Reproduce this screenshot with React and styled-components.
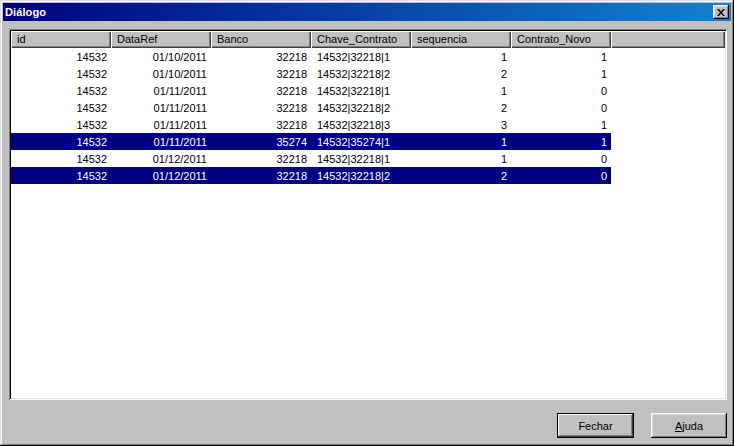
import React from "react";
import styled, { createGlobalStyle } from "styled-components";

const Global = createGlobalStyle`
  html, body { margin: 0; padding: 0; background: #c0c0c0; }
  body { font-family: "Liberation Sans", Arial, sans-serif; font-size: 11px; }
  #root { width: 734px; height: 446px; }
`;

const Window = styled.div`
  box-sizing: border-box;
  width: 734px;
  height: 446px;
  padding: 3px;
  background: #c0c0c0;
  display: flex;
  flex-direction: column;
  box-shadow: inset -1px -1px #000, inset 1px 1px #dfdfdf, inset -2px -2px #808080, inset 2px 2px #fff;
`;

const TitleBar = styled.div`
  height: 18px;
  flex: none;
  display: flex;
  align-items: center;
  justify-content: space-between;
  padding: 0 2px 0 2px;
  background: linear-gradient(to right, #000080, #1084d0);
`;

const Title = styled.span`
  color: #fff;
  font-weight: bold;
  font-size: 11px;
  letter-spacing: 0.1px;
`;

const CloseBtn = styled.div`
  box-sizing: border-box;
  width: 16px;
  height: 14px;
  background: #c0c0c0;
  display: flex;
  align-items: center;
  justify-content: center;
  box-shadow: inset -1px -1px #000, inset 1px 1px #fff, inset -2px -2px #808080, inset 2px 2px #dfdfdf;
`;

const Body = styled.div`
  flex: 1;
  display: flex;
  flex-direction: column;
  padding: 8px 4px 4px 6px;
`;

const ListBox = styled.div`
  flex: 1;
  box-sizing: border-box;
  padding: 2px;
  background: #fff;
  box-shadow: inset 1px 1px #808080, inset -1px -1px #fff, inset 2px 2px #000, inset -2px -2px #dfdfdf;
  overflow: hidden;
`;

const Header = styled.div`
  display: grid;
  grid-template-columns: repeat(6, 100px) 1fr;
  height: 17px;
`;

const HeaderCell = styled.div`
  box-sizing: border-box;
  background: #c0c0c0;
  padding: 2px 0 0 6px;
  color: #000;
  white-space: nowrap;
  box-shadow: inset 1px 1px #fff, inset -1px -1px #404040, inset -2px -2px #808080;
`;

const Row = styled.div`
  display: grid;
  grid-template-columns: repeat(6, 100px);
  width: 600px;
  height: 17px;
  align-items: center;
  background: ${(p) => (p.$selected ? "#000080" : "#fff")};
  color: ${(p) => (p.$selected ? "#fff" : "#000")};
`;

const Cell = styled.div`
  white-space: nowrap;
  text-align: ${(p) => (p.$left ? "left" : "right")};
  padding: ${(p) => (p.$left ? "0 0 0 6px" : "0 4px 0 0")};
`;

const Footer = styled.div`
  display: flex;
  justify-content: flex-end;
  gap: 17px;
  margin-top: 13px;
  padding-bottom: 1px;
`;

const Button = styled.div`
  box-sizing: border-box;
  width: ${(p) => p.$w}px;
  height: 25px;
  display: flex;
  align-items: center;
  justify-content: center;
  background: #c0c0c0;
  color: #000;
  font-size: 11px;
  box-shadow: ${(p) =>
    p.$default
      ? "inset 0 0 0 1px #000, inset -2px -2px #404040, inset 2px 2px #fff, inset -3px -3px #808080"
      : "inset -1px -1px #000, inset 1px 1px #fff, inset -2px -2px #808080, inset 2px 2px #dfdfdf"};
`;

const U = styled.span`
  text-decoration: underline;
`;

const columns = ["id", "DataRef", "Banco", "Chave_Contrato", "sequencia", "Contrato_Novo"];

const rows = [
  ["14532", "01/10/2011", "32218", "14532|32218|1", "1", "1", false],
  ["14532", "01/10/2011", "32218", "14532|32218|2", "2", "1", false],
  ["14532", "01/11/2011", "32218", "14532|32218|1", "1", "0", false],
  ["14532", "01/11/2011", "32218", "14532|32218|2", "2", "0", false],
  ["14532", "01/11/2011", "32218", "14532|32218|3", "3", "1", false],
  ["14532", "01/11/2011", "35274", "14532|35274|1", "1", "1", true],
  ["14532", "01/12/2011", "32218", "14532|32218|1", "1", "0", false],
  ["14532", "01/12/2011", "32218", "14532|32218|2", "2", "0", true],
];

export default function App() {
  return (
    <>
      <Global />
      <Window>
        <TitleBar>
          <Title>Diálogo</Title>
          <CloseBtn>
            <svg width="8" height="7" viewBox="0 0 8 7">
              <path d="M0 0h2l2 2.5 2-2.5h2L5 3.5 8 7H6L4 4.5 2 7H0l3-3.5z" fill="#000" />
            </svg>
          </CloseBtn>
        </TitleBar>
        <Body>
          <ListBox>
            <Header>
              {columns.map((c) => (
                <HeaderCell key={c}>{c}</HeaderCell>
              ))}
              <HeaderCell />
            </Header>
            {rows.map((r, i) => (
              <Row key={i} $selected={r[6]}>
                <Cell>{r[0]}</Cell>
                <Cell>{r[1]}</Cell>
                <Cell>{r[2]}</Cell>
                <Cell $left>{r[3]}</Cell>
                <Cell>{r[4]}</Cell>
                <Cell>{r[5]}</Cell>
              </Row>
            ))}
          </ListBox>
          <Footer>
            <Button $w={77} $default>Fechar</Button>
            <Button $w={76}>
              <U>A</U>juda
            </Button>
          </Footer>
        </Body>
      </Window>
    </>
  );
}
